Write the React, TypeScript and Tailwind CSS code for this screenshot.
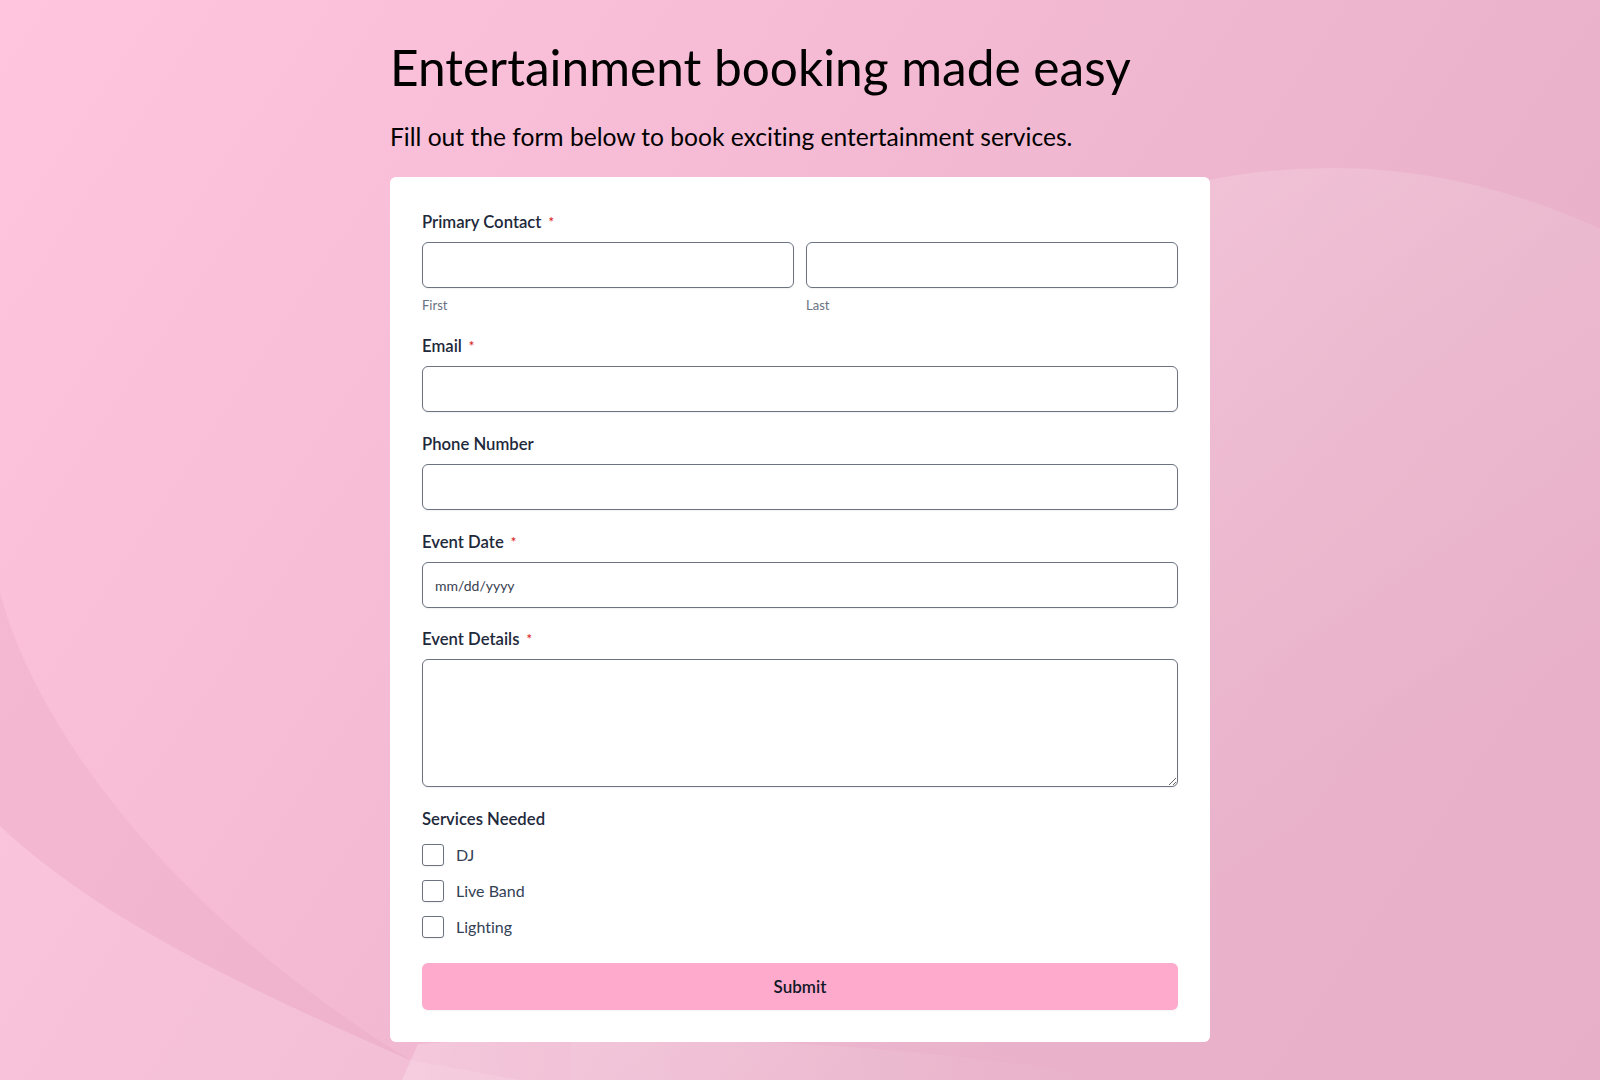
import React from "react";

function Req() {
  return <span className="ml-[7px] text-[13px] text-[#dc2626] align-[1px]">*</span>;
}

function Label({ children, req }: { children: React.ReactNode; req?: boolean }) {
  return (
    <label className="mb-2 block text-[16.7px] leading-6 font-semibold text-[#1e293b]">
      {children}
      {req && <Req />}
    </label>
  );
}

const inputCls =
  "block h-[46px] w-full rounded-md border border-[#6b7280] bg-white px-3 text-[14px] text-[#374151] shadow-[0_1px_2px_rgba(0,0,0,0.06)] outline-none";

function Background() {
  return (
    <svg
      className="pointer-events-none absolute inset-0 h-full w-full"
      viewBox="0 0 1600 1080"
      preserveAspectRatio="none"
    >
      <defs>
        <linearGradient id="base" x1="0" y1="0" x2="1600" y2="1080" gradientUnits="userSpaceOnUse">
          <stop offset="0" stopColor="#ffc4de" />
          <stop offset="0.35" stopColor="#f6bbd5" />
          <stop offset="0.7" stopColor="#eab3cb" />
          <stop offset="1" stopColor="#e7afc8" />
        </linearGradient>
        <linearGradient id="rightEl" x1="1200" y1="170" x2="1550" y2="700" gradientUnits="userSpaceOnUse">
          <stop offset="0" stopColor="#ffffff" stopOpacity="0.16" />
          <stop offset="1" stopColor="#ffffff" stopOpacity="0" />
        </linearGradient>
        <linearGradient id="bottomEl" x1="400" y1="1040" x2="1100" y2="1080" gradientUnits="userSpaceOnUse">
          <stop offset="0" stopColor="#ffffff" stopOpacity="0.22" />
          <stop offset="1" stopColor="#ffffff" stopOpacity="0" />
        </linearGradient>
      </defs>
      <rect width="1600" height="1080" fill="url(#base)" />
      <ellipse cx="1330" cy="1100" rx="760" ry="932" fill="url(#rightEl)" />
      <path d="M0 592 C 30 710 150 900 410 1060 C 250 990 100 920 0 826 Z" fill="#c47a9a" fillOpacity="0.09" />
      <path d="M0 826 C 100 920 250 990 410 1060 L 520 1080 L 0 1080 Z" fill="#ffffff" fillOpacity="0.1" />
      <path d="M402 1080 L 418 1044 C 620 1030 900 1040 1120 1080 Z" fill="url(#bottomEl)" />
    </svg>
  );
}

export default function App() {
  return (
    <div className="relative min-h-[1080px] w-full overflow-hidden font-['Lato','Noto_Sans',sans-serif] [font-variant-ligatures:none]">
      <Background />
      <div className="relative mx-auto w-[820px] pt-[38px] pb-[38px]">
        <h1 className="text-[49.6px] leading-[58px] font-normal text-black">Entertainment booking made easy</h1>
        <p className="mt-[25px] text-[24.6px] leading-8 text-black">
          Fill out the form below to book exciting entertainment services.
        </p>
        <form className="mt-[24px] rounded-md bg-white px-8 pt-[33px] pb-[32px]">
          <div>
            <Label req>Primary Contact</Label>
            <div className="grid grid-cols-2 gap-3">
              <div>
                <input className={inputCls} type="text" />
                <div className="mt-2 text-[13px] leading-[18px] text-[#6b7280]">First</div>
              </div>
              <div>
                <input className={inputCls} type="text" />
                <div className="mt-2 text-[13px] leading-[18px] text-[#6b7280]">Last</div>
              </div>
            </div>
          </div>
          <div className="mt-5">
            <Label req>Email</Label>
            <input className={inputCls} type="email" />
          </div>
          <div className="mt-5">
            <Label>Phone Number</Label>
            <input className={inputCls} type="tel" />
          </div>
          <div className="mt-5">
            <Label req>Event Date</Label>
            <input className={inputCls + " placeholder:text-[#374151]"} type="text" placeholder="mm/dd/yyyy" />
          </div>
          <div className="mt-[19px]">
            <Label req>Event Details</Label>
            <textarea className="block h-[128px] w-full rounded-md border border-[#6b7280] bg-white px-3 py-2 text-[14px] text-[#374151] shadow-[0_1px_2px_rgba(0,0,0,0.06)] outline-none" />
          </div>
          <div className="mt-5">
            <div className="text-[16.7px] leading-6 font-semibold text-[#1e293b]">Services Needed</div>
            <div className="mt-3 flex flex-col gap-3">
              {["DJ", "Live Band", "Lighting"].map((s) => (
                <label key={s} className="flex h-6 items-center gap-3 text-[16px] text-[#334155]">
                  <span className="block h-[22px] w-[22px] rounded-[3px] border border-[#6b7280] bg-white shadow-[0_1px_2px_rgba(0,0,0,0.06)]" />
                  {s}
                </label>
              ))}
            </div>
          </div>
          <button
            type="button"
            className="mt-6 block h-[47px] w-full rounded-md bg-[#feaacc] text-[17px] font-semibold text-[#111827] shadow-[0_1px_2px_rgba(0,0,0,0.05)]"
          >
            Submit
          </button>
        </form>
      </div>
    </div>
  );
}
